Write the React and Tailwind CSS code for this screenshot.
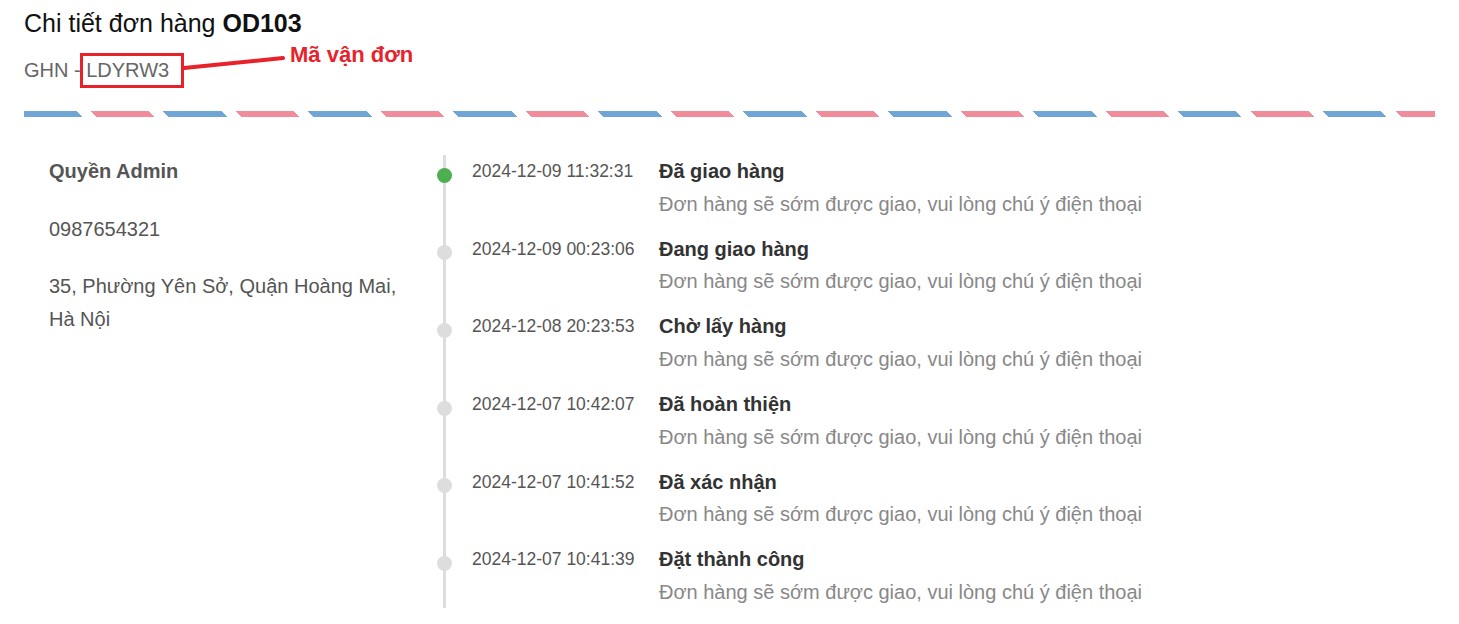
import React from 'react';

const events = [
  { time: '2024-12-09 11:32:31', title: 'Đã giao hàng', active: true },
  { time: '2024-12-09 00:23:06', title: 'Đang giao hàng' },
  { time: '2024-12-08 20:23:53', title: 'Chờ lấy hàng' },
  { time: '2024-12-07 10:42:07', title: 'Đã hoàn thiện' },
  { time: '2024-12-07 10:41:52', title: 'Đã xác nhận' },
  { time: '2024-12-07 10:41:39', title: 'Đặt thành công' },
];

const note = 'Đơn hàng sẽ sớm được giao, vui lòng chú ý điện thoại';

const App = () => {
  return (
    <div className="min-h-screen bg-white px-6 font-['Liberation_Sans',Arial,sans-serif]">
      {/* Header */}
      <div className="relative pt-[5px]">
        <h1 className="text-[25px] leading-[36px] text-[#111]">
          Chi tiết đơn hàng <span className="font-bold">OD103</span>
        </h1>
        <div className="mt-[14px] text-[20px] leading-[30px] text-[#666]">GHN - LDYRW3</div>

        {/* Annotation */}
        <div className="absolute left-[56px] top-[53px] h-[35px] w-[104px] border-[3px] border-[#e8222b]" />
        <svg className="absolute left-[158px] top-[54px]" width="104" height="18" viewBox="0 0 104 18">
          <path d="M2 14 L101 4" stroke="#e8222b" strokeWidth="4" strokeLinecap="round" />
        </svg>
        <span className="absolute left-[266px] top-[44px] text-[22px] leading-[22px] font-bold text-[#e8222b]">
          Mã vận đơn
        </span>
      </div>

      {/* Airmail stripe */}
      <div className="mt-[26px] h-[6px] bg-[repeating-linear-gradient(45deg,#6fa6d6,#6fa6d6_41.25px,transparent_0,transparent_51.25px,#f18d9b_0,#f18d9b_92.5px,transparent_0,transparent_102.5px)]" />

      <div className="flex pt-[38px]">
        {/* Receiver */}
        <div className="w-[419px] shrink-0 pl-[25px] pr-[25px] text-[20px] leading-[32.5px] text-[#555]">
          <p className="font-bold">Quyền Admin</p>
          <p className="mt-[25px]">0987654321</p>
          <p className="mt-[25px]">35, Phường Yên Sở, Quận Hoàng Mai, Hà Nội</p>
        </div>

        {/* Timeline */}
        <div className="border-l-[3px] border-[#ddd]">
          {events.map((ev, i) => (
            <div
              key={i}
              className={`relative flex pl-[26px] ${i === events.length - 1 ? '' : 'pb-[12.7px]'}`}
            >
              <span
                className={`absolute left-[-9px] top-[12.7px] h-[15px] w-[15px] rounded-full ${
                  ev.active ? 'bg-[#4caf50]' : 'bg-[#ddd]'
                }`}
              />
              <div className="w-[187px] shrink-0 text-[17.5px] leading-[32.5px] text-[#555]">{ev.time}</div>
              <div className="text-[20px] leading-[32.5px]">
                <div className="font-bold text-[#333]">{ev.title}</div>
                <div className="text-[#888]">{note}</div>
              </div>
            </div>
          ))}
        </div>
      </div>
    </div>
  );
};

export default App;
